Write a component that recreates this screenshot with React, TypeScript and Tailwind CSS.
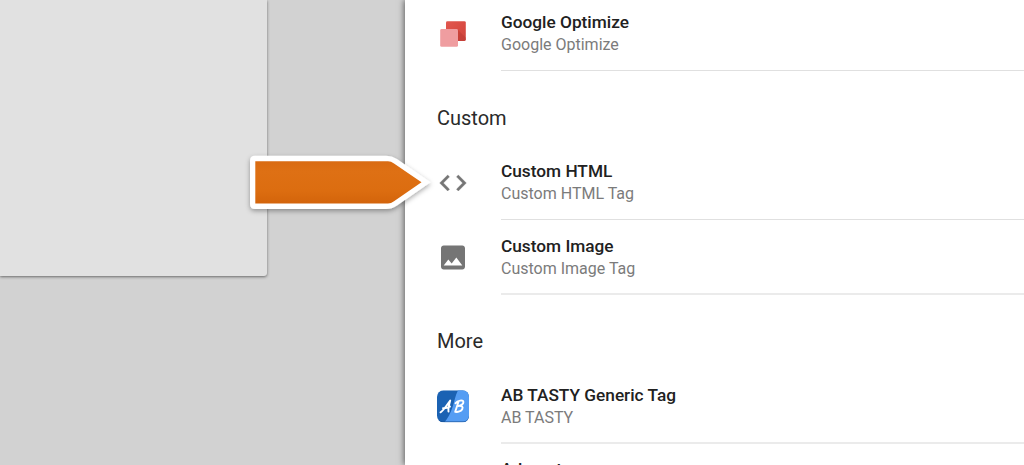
import type { ReactNode } from "react";

function OptimizeIcon() {
  return (
    <svg width="32" height="32" viewBox="0 0 32 32">
      <defs>
        <linearGradient id="red" x1="0" y1="0" x2="1" y2="1">
          <stop offset="0" stopColor="#e2574f" />
          <stop offset="0.55" stopColor="#d94b42" />
          <stop offset="1" stopColor="#cf463e" />
        </linearGradient>
      </defs>
      <rect x="9" y="3.2" width="19.8" height="19.8" rx="1.4" fill="url(#red)" />
      <path d="M20.5 11.5L28.8 19.8V21.6Q28.8 23 27.4 23H20.5Z" fill="#b93831" opacity=".5" />
      <rect x="3.2" y="11" width="17.8" height="17.8" rx="1.4" fill="#ef9da0" />
    </svg>
  );
}

function CodeIcon() {
  return (
    <svg width="32" height="32" viewBox="0 0 24 24" fill="#757575" stroke="#757575" strokeWidth=".25">
      <path d="M9.4 16.6L4.8 12l4.6-4.6L8 6l-6 6 6 6 1.4-1.4zm5.2 0l4.6-4.6-4.6-4.6L16 6l6 6-6 6-1.4-1.4z" />
    </svg>
  );
}

function ImageIcon() {
  return (
    <svg width="32" height="32" viewBox="0 -0.3 24 24" fill="#757575">
      <path d="M21 19V5c0-1.1-.9-2-2-2H5c-1.1 0-2 .9-2 2v14c0 1.1.9 2 2 2h14c1.1 0 2-.9 2-2zM8.500 13.500l2.500 3.010L14.500 12l4.500 6H5l3.500-4.500z" />
    </svg>
  );
}

function AbTastyIcon() {
  return (
    <svg width="32" height="33" viewBox="0 -0.3 32 33">
      <defs>
        <clipPath id="tile">
          <rect width="32" height="32" rx="6.500" />
        </clipPath>
      </defs>
      <g clipPath="url(#tile)">
        <rect width="32" height="32" fill="#1b62b3" />
        <path d="M21 0C18 6 17.500 11 15.500 17C13.500 23 11 28 7.500 32H32V0Z" fill="#559df3" />
        <path d="M0 27Q1 31 6 31H26Q31 31 32 26V32H0Z" fill="#174f92" opacity=".65" />
      </g>
      <g fill="none" stroke="#fff" strokeWidth="1.900" strokeLinecap="round" strokeLinejoin="round">
        <path d="M3.500 22C6.500 20.500 10.500 14 13.200 10.200C12.200 14 11 18 11.500 21.300M6 17.800C8.500 18.300 10.500 17.500 13 16.300" />
        <path d="M21.500 11.500L18.200 21.500M18.500 13C20.500 10 26.300 9.200 26.400 11.700C26.400 14 23.500 15.200 21.500 15.700C25 15.200 26.300 16.500 25.300 18.700C24.300 21 20.800 22 18.300 21.500" />
      </g>
    </svg>
  );
}

interface TagRowProps {
  icon?: ReactNode;
  title: string;
  vendor: string;
  className: string;
  body: string;
}

function TagRow({ icon, title, vendor, className, body }: TagRowProps) {
  return (
    <li className={`flex shrink-0 pl-8 ${className}`}>
      <div className="w-16 shrink-0">{icon}</div>
      <div className={`flex flex-1 flex-col whitespace-nowrap ${body}`}>
        <div className="text-[17.25px] leading-[22px] font-medium text-[#212121]">{title}</div>
        <div className="mt-px text-[16px] leading-[22px] text-[#7b7b7b]">{vendor}</div>
      </div>
    </li>
  );
}

function Heading({ children }: { children: ReactNode }) {
  return <h2 className="shrink-0 pt-8 pl-8 text-[20px] leading-[30px] text-[#2a2a2a]">{children}</h2>;
}

function Pointer() {
  return (
    <svg className="absolute top-[145px] left-[240px]" width="200" height="76" viewBox="0 0 200 76">
      <defs>
        <linearGradient id="orange" x1="0" y1="0" x2="0" y2="1">
          <stop offset="0" stopColor="#d96b12" />
          <stop offset="0.25" stopColor="#de7014" />
          <stop offset="0.7" stopColor="#dc6d10" />
          <stop offset="1" stopColor="#d3640b" />
        </linearGradient>
        <filter id="shade" x="-10%" y="-20%" width="120%" height="150%">
          <feDropShadow dx="0" dy="2" stdDeviation="2.500" floodOpacity=".35" />
        </filter>
      </defs>
      <path
        d="M15 10.800H146Q152 10.800 157 14L190.500 37.300L157 60.500Q152 64 146 64H15Q10 64 10 59V15.800Q10 10.800 15 10.800Z"
        fill="#fff"
        filter="url(#shade)"
      />
      <path d="M15.300 16.300H148Q151 16.300 154 18.500L181.500 37.300L154 56.300Q151 58.500 148 58.500H15.300Z" fill="url(#orange)" />
    </svg>
  );
}

export default function App() {
  return (
    <div className="relative flex h-[465px] w-full overflow-hidden bg-[#d2d2d2] font-['Roboto',sans-serif]">
      <div className="h-[276px] w-[267px] shrink-0 rounded-br-[3px] bg-[#e1e1e1] shadow-[0_1px_3px_rgba(0,0,0,0.5)]" />
      <main className="ml-[138px] h-full min-w-0 flex-1 bg-white shadow-[-1px_0_6px_rgba(0,0,0,0.55)]">
        <div className="-mt-1 flex flex-col">
          <ul>
            <TagRow icon={<OptimizeIcon />} title="Google Optimize" vendor="Google Optimize" className="h-[75px] pt-[22px]" body="-mt-[7px] border-b border-[#e0e0e0]" />
          </ul>
          <section className="flex h-[223px] flex-col">
            <Heading>Custom</Heading>
            <ul className="pt-[12px]">
              <TagRow icon={<CodeIcon />} title="Custom HTML" vendor="Custom HTML Tag" className="h-[75px] pt-[22px]" body="-mt-[7px] border-b border-[#e0e0e0]" />
              <TagRow icon={<ImageIcon />} title="Custom Image" vendor="Custom Image Tag" className="h-[75px] pt-[21px]" body="-mt-[6px] border-b-2 border-[#ebebeb]" />
            </ul>
          </section>
          <section className="flex flex-col">
            <Heading>More</Heading>
            <ul className="pt-[12px]">
              <TagRow icon={<AbTastyIcon />} title="AB TASTY Generic Tag" vendor="AB TASTY" className="h-[76px] pt-[22px]" body="-mt-[6px] border-b-2 border-[#ebebeb]" />
              <TagRow title="Adometry" vendor="Adometry" className="h-[75px] pt-[14px]" body="" />
            </ul>
          </section>
        </div>
      </main>
      <Pointer />
    </div>
  );
}
